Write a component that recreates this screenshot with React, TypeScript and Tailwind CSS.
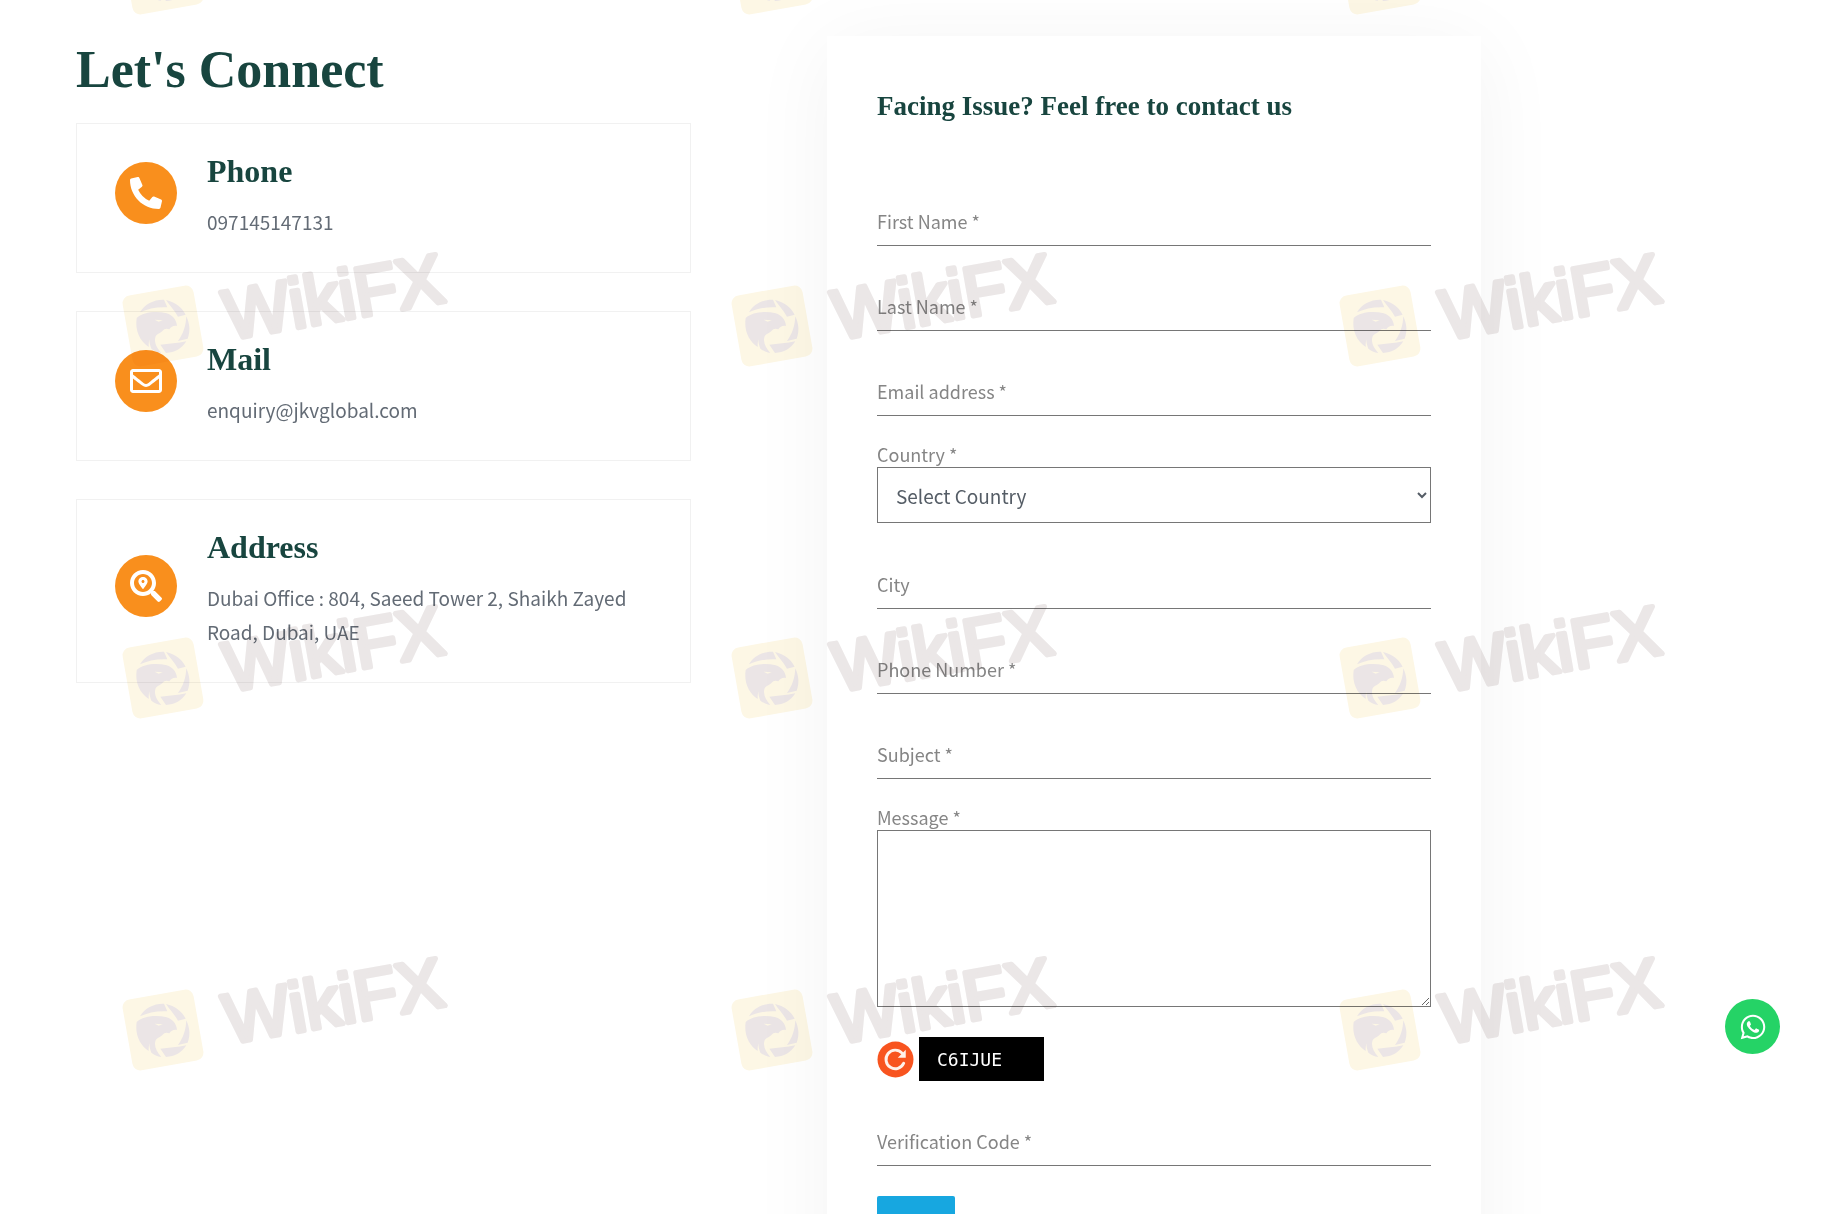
import type { ReactNode } from "react";
import { FaPhoneAlt, FaRegEnvelope, FaSearchLocation, FaWhatsapp } from "react-icons/fa";

const InfoCard = ({
  icon,
  title,
  children,
}: {
  icon: ReactNode;
  title: string;
  children: ReactNode;
}) => (
  <div className="flex items-center gap-[30px] border border-[#f1f1f1] pt-[22px] pr-10 pb-[33px] pl-[38px]">
    <div className="flex size-[62px] shrink-0 items-center justify-center rounded-full bg-[#f98f1d] text-[32px] text-white">
      {icon}
    </div>
    <div>
      <h2 className="mb-[9px] font-['Liberation_Serif',serif] text-[32px] leading-[50px] font-bold text-[#18453f]">
        {title}
      </h2>
      <p className="text-[19px] leading-[34px] text-[#636b75]">{children}</p>
    </div>
  </div>
);

// Underlined input with the label resting over it
const LineField = ({ id, label, type = "text" }: { id: string; label: string; type?: string }) => (
  <div className="relative">
    <label
      htmlFor={id}
      className="pointer-events-none absolute top-[17px] left-0 text-[18px] leading-[26px] text-[#858585]"
    >
      {label}
    </label>
    <input
      id={id}
      type={type}
      className="block h-[55px] w-full border-b border-[#767676] bg-transparent text-[19px] outline-none"
    />
  </div>
);

const RefreshIcon = () => (
  <svg viewBox="0 0 36 36" className="size-[37px]" aria-hidden="true">
    <circle cx="18" cy="18" r="17.5" fill="#f8541f" />
    <path
      d="M26 21.6A9 9 0 1 1 24.4 11.8"
      fill="none"
      stroke="#fff1ea"
      strokeWidth="2.8"
      strokeLinecap="round"
    />
    <path d="M28 8.6V16.4H20.2Z" fill="#fff1ea" />
  </svg>
);

const Watermark = ({ x, y, withText }: { x: number; y: number; withText: boolean }) => (
  <g transform={`translate(${x} ${y})`}>
    <rect x="-36" y="-36" width="72" height="72" rx="8" fill="#fdf7e5" transform="rotate(-10)" />
    {/* Eagle head inside the shutter ring */}
    <g transform="scale(0.333) translate(-145 -150)" fill="#ebe5e6">
      <path d="M76 109C90 84 118 70 148 71L158 94C128 92 100 98 76 109Z" />
      <path d="M154 72C182 78 203 96 213 116L190 122C180 104 166 90 154 72Z" />
      <path d="M215 121C225 142 228 166 219 188L190 195C206 174 214 148 215 121Z" />
      <path d="M137 206C162 203 190 202 215 196C202 218 180 230 154 231Z" />
      <path d="M66 126C86 108 124 104 156 112C174 118 186 132 187 150C176 148 170 152 164 160C156 156 148 158 144 164C136 172 124 174 122 184C118 200 126 216 140 231C128 229 118 224 110 218C106 208 104 200 104 190C102 200 102 206 102 213C76 196 60 164 66 126Z" />
      <path d="M120 131L144 133L132 137Z" fill="#fdf7e5" />
    </g>
    {withText && (
      <text
        x="62"
        y="25"
        transform="rotate(-10)"
        className="font-['Liberation_Sans',sans-serif] text-[70px]"
        fill="#ebe7e7"
        stroke="#ebe7e7"
        strokeWidth="5"
        strokeLinejoin="round"
      >
        WikiFX
      </text>
    )}
  </g>
);

const Watermarks = () => (
  <svg
    className="pointer-events-none absolute inset-0 h-full w-full mix-blend-multiply"
    aria-hidden="true"
  >
    {[-26, 326, 678, 1030].map((y, row) =>
      [163, 772, 1380].map((x) => (
        <Watermark key={`${x}-${y}`} x={x} y={y} withText={row > 0} />
      ))
    )}
  </svg>
);

const App = () => {
  return (
    <div className="relative h-screen overflow-hidden bg-white font-['Noto_Sans_CJK_SC',sans-serif]">
      <main className="grid grid-cols-[615fr_654fr] items-start gap-x-[136px] pt-9 pr-[344px] pl-[76px]">
        {/* Contact details */}
        <section>
          <h1 className="mb-[19px] font-['Liberation_Serif',serif] text-[52px] leading-[68px] font-bold text-[#18453f]">
            Let's Connect
          </h1>
          <div className="flex flex-col gap-[38px]">
            <InfoCard icon={<FaPhoneAlt />} title="Phone">
              097145147131
            </InfoCard>
            <InfoCard icon={<FaRegEnvelope />} title="Mail">
              enquiry@jkvglobal.com
            </InfoCard>
            <InfoCard icon={<FaSearchLocation />} title="Address">
              Dubai Office : 804, Saeed Tower 2, Shaikh Zayed Road, Dubai, UAE
            </InfoCard>
          </div>
        </section>

        {/* Contact form */}
        <section className="bg-white p-[50px] shadow-[0_10px_80px_rgba(0,0,0,0.05)]">
          <h2 className="mb-[65px] font-['Liberation_Serif',serif] text-[27px] leading-10 font-bold text-[#18453f]">
            Facing Issue? Feel free to contact us
          </h2>
          <form className="flex flex-col gap-[30px]">
            <LineField id="first-name" label="First Name *" />
            <LineField id="last-name" label="Last Name *" />
            <LineField id="email" label="Email address *" type="email" />
            <div className="pb-px">
              <label htmlFor="country" className="mb-[5px] block text-[18px] leading-4 text-[#858585]">
                Country *
              </label>
              <select
                id="country"
                className="block h-14 w-full border border-[#767676] bg-white px-[14px] text-[19px] text-[#555d66]"
              >
                <option>Select Country</option>
              </select>
            </div>
            <LineField id="city" label="City" />
            <LineField id="phone" label="Phone Number *" type="tel" />
            <LineField id="subject" label="Subject *" />
            <div>
              <label htmlFor="message" className="mb-[5px] block text-[18px] leading-4 text-[#858585]">
                Message *
              </label>
              <textarea
                id="message"
                className="block h-[177px] w-full border border-[#767676] bg-white p-4 text-[19px] outline-none"
              />
            </div>
            <div className="flex h-11 items-center gap-[5px]">
              <button type="button" aria-label="Refresh code">
                <RefreshIcon />
              </button>
              <div className="flex h-11 w-[125px] items-center bg-black pl-[18px] font-['DejaVu_Sans_Mono',monospace] text-[18px] text-white">
                C6IJUE
              </div>
            </div>
            <LineField id="code" label="Verification Code *" />
            <button
              type="submit"
              aria-label="Send"
              className="h-[50px] w-[78px] rounded-xs bg-[#17a7e0]"
            />
          </form>
        </section>
      </main>

      <Watermarks />

      <a
        href="#whatsapp"
        aria-label="WhatsApp"
        className="fixed right-[45px] bottom-40 flex size-[55px] items-center justify-center rounded-full bg-[#25d366] text-[28px] text-white"
      >
        <FaWhatsapp />
      </a>
    </div>
  );
};

export default App;
